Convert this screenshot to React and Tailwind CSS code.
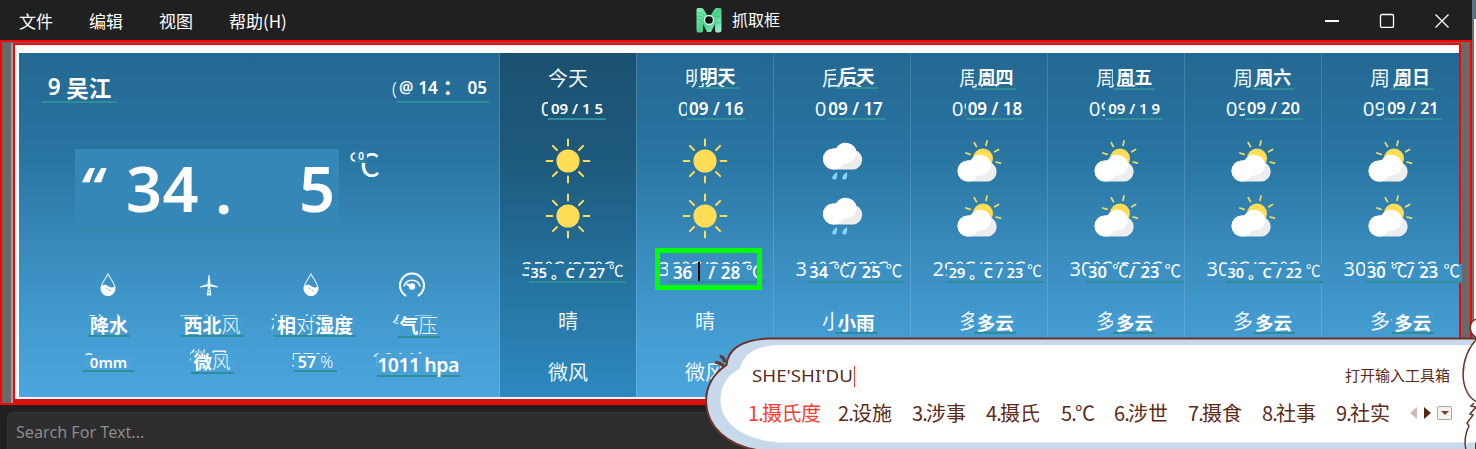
import React from "react";

const UI = "font-['Noto_Sans','Noto_Sans_CJK_SC',sans-serif]";
const CJK = "font-['Noto_Sans_CJK_SC',sans-serif]";

/* Recognised text laid over the captured picture, with its teal underline. */
function Ocr({ className = "", left, parts }) {
  return (
    <div
      className={`absolute z-10 flex items-center border-b-2 border-[#2f8d99] whitespace-pre leading-none font-semibold text-white ${className}`}
      style={left === undefined ? undefined : { left }}
    >
      {parts.map((p, i) =>
        p.startsWith("℃") ? (
          <span key={i} className="flex items-center">
            <span className={`${CJK} -mt-[3px] font-normal`}>℃</span>
            {p.slice(1)}
          </span>
        ) : (
          <span key={i}>{p}</span>
        )
      )}
    </div>
  );
}

function Sun() {
  return (
    <svg width="48" height="48" viewBox="-24 -24 48 48">
      <circle r="11.6" fill="#ffdd55" />
      {[0, 45, 90, 135, 180, 225, 270, 315].map((a) => (
        <path key={a} d="M0-15.6V-21.4" transform={`rotate(${a})`} stroke="#ffdd55" strokeWidth="2" strokeLinecap="round" />
      ))}
    </svg>
  );
}

function Cloud() {
  return (
    <g>
      <path d="M-9.5 14A10.5 10.5 0 0 1-9.5-7C-7.5-7-6.800-7.300-6-8A11 11 0 0 1 12-5.500A10 10 0 0 1 10.500 14Z" fill="#ededee" />
      <path d="M-9.500 14A10.500 10.500 0 0 1-9.500-7Q-7.800-7-6.800-7.200A11 11 0 0 1 13.600-3C13.600 4 8 8.500 0 8.200Q-3 14-9.500 14Z" fill="white" />
    </g>
  );
}

function Rain() {
  return (
    <svg width="48" height="48" viewBox="-24 -24 48 48">
      <g transform="translate(1,-5.500)">
        <Cloud />
      </g>
      <path d="M-5 11C-9 13.500-10.800 16.800-9 18.300C-6.500 19.500-4.200 18-5 11Z M5 11C1 13.500-.8 16.800 1 18.300C3.500 19.500 5.800 18 5 11Z" fill="#84d4fa" />
    </svg>
  );
}

function Partly() {
  return (
    <svg width="48" height="48" viewBox="-24 -24 48 48">
      <g transform="translate(4,-2.500)">
        <circle r="10" fill="#ffdd55" />
        {[-72, -29, 13, 60, 105].map((a) => (
          <path key={a} d="M0-13.500V-18" transform={`rotate(${a})`} stroke="#f3dc5f" strokeWidth="1.700" strokeLinecap="round" />
        ))}
      </g>
      <g transform="translate(-1.500,6.500)">
        <Cloud />
      </g>
    </svg>
  );
}

const ICONS = { sun: Sun, rain: Rain, partly: Partly };

const DAYS = [
  { name: "今天", date: "09/15", ocrDate: "09 / 1 5", dateSize: "text-[15px]", temp: "35℃/27℃", ocrTemp: ["35", "。C", "/", "27", "℃"], tempSize: "pl-[2px] text-[14.500px]", icon: "sun", cond: "晴" },
  { name: "明天", date: "09/16", ocrName: true, ocrDate: "09 / 16", dateSize: "text-[17px]", temp: "36℃/28℃", ocrTemp: ["36", " ", "/", "28", "℃"], tempSize: "pl-[5px] text-[17px]", icon: "sun", cond: "晴" },
  { name: "后天", date: "09/17", ocrName: true, ocrDate: "09 / 17", dateSize: "text-[17px]", temp: "34℃/25℃", ocrTemp: ["34", "℃/", "25", "℃"], tempSize: "pl-[2px] text-[16.500px]", icon: "rain", cond: "小雨" },
  { name: "周四", date: "09/18", ocrName: true, ocrDate: "09 / 18", dateSize: "text-[17px]", temp: "29℃/23℃", ocrTemp: ["29", "。C", "/", "23", "℃"], tempSize: "pl-[2px] text-[14.5px]", icon: "partly", cond: "多云" },
  { name: "周五", date: "09/19", ocrName: true, ocrDate: "09 / 1 9", dateSize: "text-[15px]", temp: "30℃/23℃", ocrTemp: ["30", "℃/", "23", "℃"], tempSize: "pl-[2px] text-[16.500px]", icon: "partly", cond: "多云" },
  { name: "周六", date: "09/20", ocrName: true, ocrDate: "09 / 20", dateSize: "text-[16.5px]", temp: "30℃/22℃", ocrTemp: ["30", "。C", "/", "22", "℃"], tempSize: "pl-[2px] text-[14.5px]", icon: "partly", cond: "多云" },
  { name: "周日", date: "09/21", ocrName: true, ocrDate: "09 / 21", dateSize: "text-[16px]", temp: "30℃/23℃", ocrTemp: ["30", "℃/", "23", "℃"], tempSize: "pl-[2px] text-[16.500px]", icon: "partly", cond: "多云" },
];

function Day({ d, i }) {
  const Icon = ICONS[d.icon];
  const row = "relative flex h-[30px] shrink-0 items-center justify-center text-[20px] whitespace-nowrap";
  const base = `${CJK} text-white/95 leading-none`;
  const today = i === 0;
  return (
    <div className={`flex w-[137px] shrink-0 flex-col border-l border-white/15 pt-[10px] ${today ? "bg-[linear-gradient(#1b5170,#1d597c_30%,#24709b_62%,#2c89bf)] bg-clip-padding" : ""}`}>
      <div className={row}>
        <span className={base}>{d.name}</span>
        {d.ocrName && (
          <Ocr left={59.600 + (i - 1) * 1.900} parts={[d.name]} className={`${CJK} ${i < 3 ? "top-[3px]" : "top-[4px]"} h-[23px] w-[42px] justify-center bg-[#256b96] bg-clip-content pb-[4px] text-[18px] !font-bold`} />
        )}
      </div>
      <div className={row}>
        <span className="text-[20.500px] leading-none text-white/95 font-['Noto_Sans',sans-serif]">{d.date}</span>
        <Ocr left={48 + i * 2.300} parts={[d.ocrDate]} className={`top-[5px] h-[22px] w-[58px] justify-center ${today ? "bg-[#1b5677]" : "bg-[#276e9a]"} ${d.dateSize}`} />
      </div>
      <div className="mt-[10px] flex h-[55px] shrink-0 items-center justify-center"><Icon /></div>
      <div className="flex h-[55px] shrink-0 items-center justify-center"><Icon /></div>
      <div className={`${row} mt-[11px]`}>
        <span className={`${UI} leading-none text-white/95`}>{d.temp}</span>
        <Ocr left={28.500 + i * 2.400} parts={d.ocrTemp} className={`top-[10px] h-[19px] w-[97px] justify-between pr-[2px] pb-px ${today ? "bg-[#24719d]" : "bg-[#3c90c2]"} ${d.tempSize}`} />
        {i === 1 && (
          <div className="absolute top-[-6px] left-[18px] z-20 h-[42px] w-[107px] border-[5px] border-[#00ff00]">
            <div className="mt-[9px] ml-[38px] h-[19px] w-[2px] bg-black" />
          </div>
        )}
      </div>
      <div className={`${row} mt-[22px]`}>
        <span className={base}>{d.cond}</span>
        {d.cond !== "晴" && (
          <Ocr left={61 + (i - 2) * 2.200} parts={[d.cond]} className={`${CJK} top-[6px] h-[22px] w-[42px] justify-center bg-[#439bcf] text-[18.500px] !font-bold`} />
        )}
      </div>
      <div className={`${row} mt-[21px]`}><span className={base}>微风</span></div>
    </div>
  );
}

function Drop() {
  return (
    <svg width="18" height="26" viewBox="0 0 18 26" fill="none">
      <path d="M9 2C6.500 7 2 11.500 2 16.500A7 7 0 0 0 16 16.500C16 11.500 11.500 7 9 2Z" stroke="#dcecf5" strokeWidth="1.200" />
      <path d="M2.300 14Q6 11.500 9 14T15.700 14.500C17 20 13 24 9 24S1 20 2.300 14Z" fill="white" />
      <path d="M7 16l1.500 1M9.500 18l2 1" stroke="#6ab1da" />
    </svg>
  );
}

function Turbine() {
  return (
    <svg width="20" height="26" viewBox="0 0 20 26">
      <path d="M9.500 3H10.500L11.500 12L19 14.500L18.800 15.600L11 14.500L12.400 23.500H7.600L9 14.500L1.200 15.600L1 14.500L8.500 12Z" fill="#f1f8fc" />
      <path d="M9 17l2 1.500M8.500 20l2.500 1" stroke="#5aa9d7" />
    </svg>
  );
}

function Gauge() {
  return (
    <svg width="28" height="26" viewBox="0 0 28 26" fill="none" stroke="white" strokeLinecap="round">
      <path d="M7.500 23.500A12 12 0 1 1 20.500 23.500" strokeWidth="2" />
      <path d="M6 14A8.500 8.500 0 0 1 22 14" strokeWidth="1.500" />
      <circle cx="14" cy="14.500" r="3.200" fill="white" stroke="none" />
      <path d="M14 14.500L9.500 12.500" strokeWidth="2.200" />
    </svg>
  );
}

const METRICS = [
  { Icon: Drop, label: "降水", value: "0mm", b: "降水", v: "0mm",
    bc: "top-[7px] left-[31px] w-[42px] h-[21px]", vc: "top-[10px] left-[26px] w-[51px] h-[17px] text-[15px]" },
  { Icon: Turbine, label: "西北风", value: "微风", b: "西北", thin: "风", v: "微", vThin: "风",
    bc: "top-[7px] left-[22px] w-[63px] h-[21px]", vc: "top-[8px] left-[32px] w-[43px] h-[21px] text-[18.500px]" },
  { Icon: Drop, label: "相对湿度", value: "57%", b: "相", thin: "对", rest: "湿度", v: "57", vThin: " %",
    bc: "top-[7px] left-[14px] w-[82px] h-[21px]", vc: "top-[9px] left-[34px] w-[43px] h-[18px] text-[16px]" },
  { Icon: Gauge, label: "气压", value: "1011hpa", b: "气", thin: "压", v: "1011 hpa",
    bc: "top-[7px] left-[36px] w-[42px] h-[22px]", vc: "top-[9px] left-[15px] w-[83px] h-[23px] text-[19.500px] tracking-[-0.500px]" },
];

function Metric({ m }) {
  const row = "relative flex h-[30px] w-full items-center justify-center whitespace-nowrap text-[20px] leading-none";
  const box = "absolute z-10 flex items-center justify-center whitespace-pre border-b-2 border-[#2f8d99]";
  return (
    <div className="flex w-[101.500px] flex-col items-center">
      <div className="flex h-[30px] items-center"><m.Icon /></div>
      <div className={`${row} mt-[9px]`}>
        <span className={`${CJK} text-white/85`}>{m.label}</span>
        <div className={`${box} ${CJK} bg-[#439bcf] pb-[3px] text-[19px] text-white ${m.bc}`}>
          <b>{m.b}</b><span className="font-light">{m.thin}</span><b>{m.rest}</b>
        </div>
      </div>
      <div className={`${row} mt-[6px]`}>
        <span className={`${UI} text-white/85`}>{m.value}</span>
        <div className={`${box} ${UI} bg-[#48a1d7] text-white ${m.vc}`}>
          <span className="font-semibold">{m.v}</span><span className="font-light">{m.vThin}</span>
        </div>
      </div>
    </div>
  );
}

function Current() {
  return (
    <section className="flex w-[480px] shrink-0 flex-col">
      <div className="flex h-[50px] shrink-0 items-end justify-between pr-[10px] pl-[23px]">
        <div className={`flex h-[28px] w-[75px] items-center justify-center border-b-2 border-[#2f8d99] pb-px text-[22.500px] leading-none font-bold whitespace-pre text-white ${CJK}`}>
          <span className="font-['Noto_Sans',sans-serif] font-semibold">9 </span>吴江
        </div>
        <div className="flex items-end">
          <span className="pb-[6px] text-[18px] leading-none font-light text-white">(</span>
          <div className="flex h-[28px] w-[92px] items-center justify-between border-b-2 border-[#2f8d99] px-[2px] pb-[2px] text-[17px] leading-none font-semibold text-white">
            <span className="text-[16px]">@</span><span>14</span><span className={`${CJK} w-[20px] text-[20px]`}>：</span><span>05</span>
          </div>
        </div>
      </div>
      <div className="flex h-[128px] shrink-0 items-end pl-[56px]">
        <div className="flex h-[82px] w-[264px] items-center border-b-2 border-[#2f8aa6] bg-[#3587b8] pb-[4px] text-[63px] leading-none font-semibold text-white">
          <span className="w-[51px] pt-[1px] pl-[4px] text-[57px] italic">“</span>
          <span className="w-[89px] tracking-[0.5px]">34</span>
          <span className="w-[84px] pt-[5px]">.</span>
          <span>5</span>
        </div>
        <div className={`relative ml-[10px] h-[84px] w-[32px] text-[31px] leading-none text-white ${CJK}`}>
          ℃
          <div className="absolute top-[4px] left-[6px] flex h-[12px] w-[12px] items-center justify-center border-b-2 border-[#2f8d99] bg-[#2e7cac] text-[10px] font-semibold font-['Noto_Sans',sans-serif]">0</div>
        </div>
      </div>
      <div className="mt-[39px] flex pl-[38px]">
        {METRICS.map((m) => <Metric key={m.label} m={m} />)}
      </div>
    </section>
  );
}

const CANDIDATES = [
  ["1.", "摄氏度", "w-[90px]"], ["2.", "设施", "w-[74px]"], ["3.", "涉事", "w-[74px]"],
  ["4.", "摄氏", "w-[75px]"], ["5.", "℃", "w-[53px]"], ["6.", "涉世", "w-[74px]"],
  ["7.", "摄食", "w-[74px]"], ["8.", "社事", "w-[74px]"], ["9.", "社实", "w-[70px]"],
];

function InputPanel() {
  return (
    <div className="absolute top-[315px] left-[700px] z-30 h-[134px] w-[776px] overflow-hidden">
      <svg className="absolute inset-0" width="776" height="134" viewBox="0 0 776 134" fill="none">
        <path d="M776 23.500H68C42 25 28 34 26.500 50C13 59 6 72 6 87C7 111 26 131 60 135.500H776Z" fill="#c8d9eb" stroke="#6b3428" strokeWidth="2" />
        <path d="M776 30H78C56 31 44 38 39.500 54C27 60 20 72 20.500 87C22 108 42 124 78 127.500H776Z" fill="white" />
        <path d="M21 41.500Q24 43 24.500 46M16.500 47.500Q20 48 23 50.500" stroke="#6b3428" strokeWidth="3" strokeLinecap="round" />
        <path d="M777 4C768 6 768 20 778 23M777 24C759 41 758 78 777 87M774 88L771 91L776 92L770 99L773 100L767 108L769 111C765 119 764 126 766 135" fill="white" stroke="#6b3428" strokeWidth="1.500" />
      </svg>
      <div className="relative flex h-full flex-col text-[#5c2b1a]">
        <div className="mt-[46px] flex h-[30px] items-center pr-[26px] pl-[52px]">
          <span className="w-[102px] text-[16px] leading-none font-['Noto_Sans',sans-serif]">
            <span className="inline-block origin-left scale-x-[1.170]">SHE'SHI'DU</span>
          </span>
          <span className="h-[21px] w-px bg-[#f03a30]" />
          <span className={`ml-auto -mt-[3px] text-[15px] leading-none ${CJK}`}>打开输入工具箱</span>
        </div>
        <div className={`mt-[7px] flex h-[30px] items-center pl-[48px] text-[20px] leading-none whitespace-nowrap ${CJK}`}>
          {CANDIDATES.map(([n, t, w], i) => (
            <span key={n} className={`${w} flex shrink-0 items-center ${i === 0 ? "tracking-[-0.500px] text-[#fb3b30]" : ""}`}>
              <span className="w-[14px] tracking-[-0.900px]">{n}</span>{t}
            </span>
          ))}
          <svg className="ml-[3px]" width="46" height="18" viewBox="0 0 46 18">
            <path d="M8 3V15L1 9Z" fill="#ccbdb8" />
            <path d="M15 3V15L22 9Z" fill="#5c2510" />
            <rect x="28.500" y="2.500" width="14" height="13" rx="1.500" fill="#f6f2f0" stroke="#b8a49c" />
            <path d="M32 7H40L36 11Z" fill="#7b3d2a" />
          </svg>
        </div>
      </div>
    </div>
  );
}

function Logo() {
  return (
    <svg width="26" height="26" viewBox="0 0 26 26">
      <defs>
        <linearGradient id="logo" x1="0" y1="0" x2="1" y2="1">
          <stop stopColor="#8df0b5" /><stop offset=".5" stopColor="#48cf8c" /><stop offset="1" stopColor="#a2f0d2" />
        </linearGradient>
      </defs>
      <path d="M2 1H5.500Q7 1 8 3L13 11L18 3Q19 1 20.500 1H24Q25.500 1 25.500 3V23Q25.500 25.500 23 25.500H21Q19 25.500 19 23V17L15 25H11L7 17V23Q7 25.500 5 25.500H2Q.5 25.500.5 23V3Q.5 1 2 1Z" fill="url(#logo)" />
      <path d="M1 6Q5 5 8 8M1 9Q5 8 8 12M1 12Q5 12 7 16M19 9Q22 11 25 9M19 16Q22 17 25 15" stroke="#30bd78" strokeWidth=".7" fill="none" />
      <circle cx="13" cy="13" r="4.500" fill="#111" stroke="#d6f5e7" strokeWidth="1.300" />
    </svg>
  );
}

export default function App() {
  return (
    <div className={`relative flex h-[449px] w-[1476px] overflow-hidden bg-[#202020] ${UI}`}>
      <div className="flex w-[1472px] shrink-0 flex-col">
        <header className="flex h-[40px] shrink-0 items-center pl-[19px] text-white">
          <nav className={`flex w-[677px] items-center gap-[36px] pt-px text-[17px] ${CJK}`}>
            <span>文件</span><span>编辑</span><span>视图</span><span>帮助(H)</span>
          </nav>
          <div className={`flex items-center gap-[10px] text-[16px] ${CJK}`}>
            <Logo /><span className="-mt-[2px]">抓取框</span>
          </div>
          <div className="mr-[22px] ml-auto flex gap-[39px]">
            <svg width="16" height="16" viewBox="0 0 16 16"><path d="M1 9H15" stroke="white" strokeWidth="2" /></svg>
            <svg width="16" height="16" viewBox="0 0 16 16"><rect x="1.500" y="2.500" width="13" height="13" rx="1.500" fill="none" stroke="white" strokeWidth="1.300" /></svg>
            <svg width="16" height="16" viewBox="0 0 16 16"><path d="M1.500 2.500L14.500 15.500M14.500 2.500L1.500 15.500" stroke="white" strokeWidth="1.300" /></svg>
          </div>
        </header>
        <div className="flex h-[365px] shrink-0 border-2 border-[#fe0000] bg-[#696969] pt-px pr-[9px] pl-[9px]">
          <div className="flex w-[1450px] border-l-2 border-[#c09090]">
            <div className="flex w-[1448px] flex-col border-2 border-b-[4px] border-[#fb0303] border-b-[#cc1717] bg-white">
              <div className="mt-[8px] ml-[4px] flex h-[344px] w-[1440px] shrink-0 bg-[linear-gradient(#236892,#2975a2_30%,#3a8dbf_60%,#439bd0_80%,#4aa6dd)]">
                <Current />
                {DAYS.map((d, i) => <Day key={d.name} d={d} i={i} />)}
              </div>
            </div>
          </div>
        </div>
        <footer className="flex grow pt-[7px] pl-[7px]">
          <div className="flex h-[44px] grow rounded-tl-[5px] border border-[#343434] bg-[#2d2d2d] pt-[7px] pl-[8px] text-[17px] leading-[24px] text-[#8b8b8b]">
            <span className="origin-left scale-x-[0.950]">Search For Text...</span>
          </div>
        </footer>
      </div>
      <div className="flex grow flex-col border-l-2 border-[#707070]">
        <div className="h-[19px] bg-[#4a7394]" /><div className="grow bg-[#f4f4f4]" />
      </div>
      <InputPanel />
    </div>
  );
}
